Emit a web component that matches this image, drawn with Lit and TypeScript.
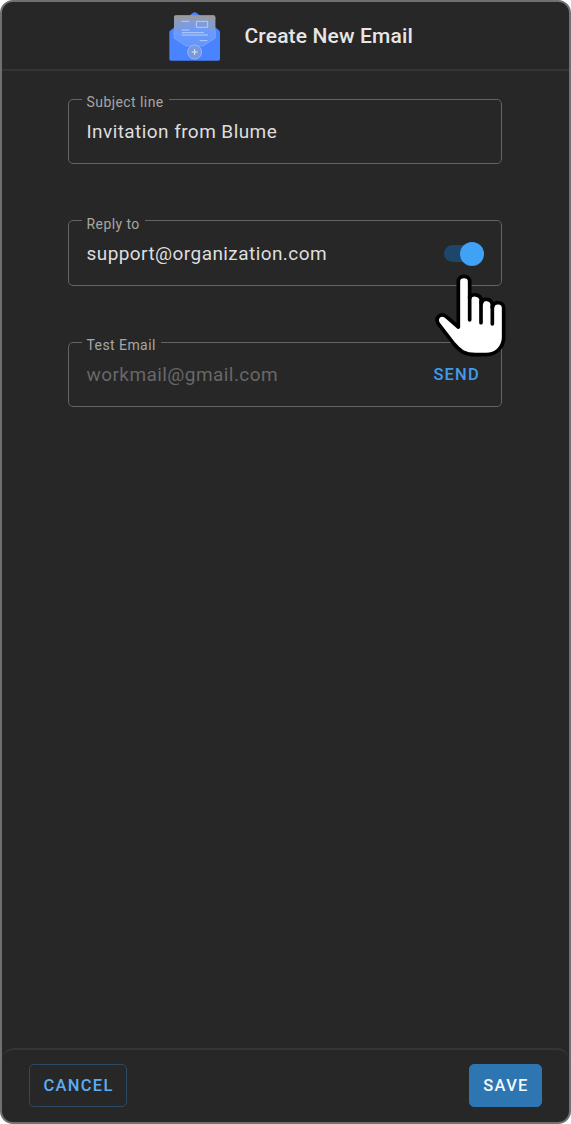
import { LitElement, html, css, svg } from "lit";
import { customElement, property } from "lit/decorators.js";

@customElement("outlined-field")
class OutlinedField extends LitElement {
  @property() label = "";
  @property() value = "";
  @property({ type: Boolean }) muted = false;

  static styles = css`
    :host { display: block; position: relative; }
    .field {
      box-sizing: border-box;
      height: 74px;
      margin: 0;
      padding: 0 17px 0 13px;
      border: 1px solid #646464;
      border-radius: 5px;
      min-width: 0;
    }
    .label {
      padding: 0 5px;
      height: 18px;
      line-height: 24px;
      font-size: 14px;
      letter-spacing: 0.43px;
      color: #a6a6a6;
      white-space: nowrap;
    }
    .row {
      display: flex;
      align-items: center;
      justify-content: space-between;
      height: 24px;
      margin-top: 12px;
      padding-left: 5px;
    }
    .value { font-size: 19px; line-height: 24px; letter-spacing: 0.43px; color: #dedede; }
    .muted { color: #686868; }
  `;

  render() {
    return html`<fieldset class="field">
      <legend class="label">${this.label}</legend>
      <div class="row">
        <span class="value ${this.muted ? "muted" : ""}">${this.value}</span>
        <slot></slot>
      </div>
    </fieldset>`;
  }
}

const envelope = svg`
  <defs>
    <linearGradient id="sheet" x1="0" y1="0" x2="0" y2="1">
      <stop offset="0" stop-color="#9a9a9c"/><stop offset=".2" stop-color="#8a9bcb"/>
      <stop offset=".48" stop-color="#6b9bfb"/><stop offset="1" stop-color="#6395ff"/>
    </linearGradient>
    <radialGradient id="corner" cx=".5" cy=".55" r=".62">
      <stop offset=".55" stop-color="#999" stop-opacity="0"/><stop offset="1" stop-color="#999" stop-opacity=".65"/>
    </radialGradient>
  </defs>
  <path fill="#4a83ff" d="M28 97Q28 93 32 91L98 39Q104 35 110 39L176 90Q180 93 180 97V177Q180 182 175 182H33Q28 182 28 177Z"/>
  <path fill="url(#sheet)" d="M42 52Q42 46 48 46H160Q166 46 166 52V114L130 138H78L42 114Z"/>
  <path fill="url(#corner)" d="M42 52Q42 46 48 46H160Q166 46 166 52V90H42Z"/>
  <path fill="none" stroke="#88aefc" stroke-width="2" d="M42 92V114L78 138H130L166 114V92"/>
  <g fill="none" stroke="#c1d5ff" stroke-width="2.6">
    <path d="M65 64H88M65 90H88M65 98H132M65 105H144M119 122H142"/>
    <path d="M109 64H143V82H109Z"/>
  </g>
  <circle cx="104" cy="156" r="21" fill="#7899dc" stroke="#9ebcff" stroke-width="2.5"/>
  <path stroke="#dce6ff" stroke-width="3" d="M104 147V165M95 156H113"/>`;

@customElement("app-root")
class AppRoot extends LitElement {
  static styles = css`
    :host {
      display: block;
      height: 1124px;
      background: #fff;
      font-family: Roboto, sans-serif;
    }
    .dialog {
      box-sizing: border-box;
      height: 1124px;
      display: flex;
      flex-direction: column;
      background: #272727;
      border: 2px solid #707070;
      border-radius: 13px;
      overflow: hidden;
    }
    .header {
      box-sizing: border-box;
      height: 69px;
      flex: none;
      display: flex;
      align-items: flex-start;
      padding-left: 158px;
      border-bottom: 2px solid #353535;
    }
    .logo { display: block; width: 70px; height: 74px; margin-top: -2px; flex: none; }
    .title {
      margin: 20px 0 0 14.5px;
      font-size: 21px;
      line-height: 29px;
      font-weight: 500;
      letter-spacing: 0.15px;
      color: #e6e6e6;
      white-space: nowrap;
    }
    .content {
      flex: 1;
      display: flex;
      flex-direction: column;
      gap: 47.5px;
      padding: 19px 67px 0 65.5px;
    }
    .switch {
      display: flex;
      justify-content: flex-end;
      align-items: center;
      width: 40px;
      height: 17px;
      border-radius: 9px;
      background: #1d466a;
    }
    .thumb { flex: none; width: 24px; height: 24px; border-radius: 50%; background: #3fa2f7; }
    .hand {
      position: absolute;
      z-index: 2;
      left: 352.5px;
      top: -1.5px;
      width: 100px;
      height: 150px;
      pointer-events: none;
    }
    .send {
      border: 0;
      padding: 0;
      margin-right: 4px;
      background: none;
      font: 500 16.5px/24px Roboto, sans-serif;
      letter-spacing: 1.2px;
      color: #3f9cec;
    }
    .footer {
      box-sizing: border-box;
      height: 74px;
      flex: none;
      display: flex;
      align-items: flex-start;
      justify-content: space-between;
      padding: 14px 27px 0;
      border-top: 2px solid #353535;
      border-radius: 12px 12px 0 0;
    }
    .button {
      box-sizing: border-box;
      height: 43px;
      padding: 0 0 0 1px;
      border: 1.5px solid #2a4a66;
      border-radius: 5px;
      background: none;
      font: 500 16.5px/40px Roboto, sans-serif;
      letter-spacing: 1.3px;
      color: #5aaef4;
    }
    .cancel { width: 98px; }
    .save { width: 73px; background: #2d76b2; border-color: #2d76b2; color: #f4f8fb; }
  `;

  render() {
    return html`<main class="dialog">
      <header class="header">
        <svg class="logo" viewBox="0 0 210 222" aria-hidden="true">${envelope}</svg>
        <h1 class="title">Create New Email</h1>
      </header>
      <section class="content">
        <outlined-field label="Subject line" value="Invitation from Blume"></outlined-field>
        <outlined-field label="Reply to" value="support@organization.com">
          <div class="switch"><span class="thumb"></span></div>
          <svg class="hand" viewBox="0 0 300 450" aria-hidden="true">
            <path fill="#fff" stroke="#000" stroke-width="11" stroke-linejoin="round" d="M115 351V214C115 194 149 194 149 214V264C152 250 183 250 184 272V280C187 262 217 264 217 286V293C220 272 251 274 251 294V382C251 412 228 434 198 434H166C135 434 120 424 102 402L57 344C42 325 61 306 78 319Z"/>
            <path fill="none" stroke="#000" stroke-width="11" stroke-linecap="round" d="M149 260V330M183 274V338M217 288V342"/>
          </svg>
        </outlined-field>
        <outlined-field label="Test Email" value="workmail@gmail.com" muted>
          <button class="send">SEND</button>
        </outlined-field>
      </section>
      <footer class="footer">
        <button class="button cancel">CANCEL</button>
        <button class="button save">SAVE</button>
      </footer>
    </main>`;
  }
}
